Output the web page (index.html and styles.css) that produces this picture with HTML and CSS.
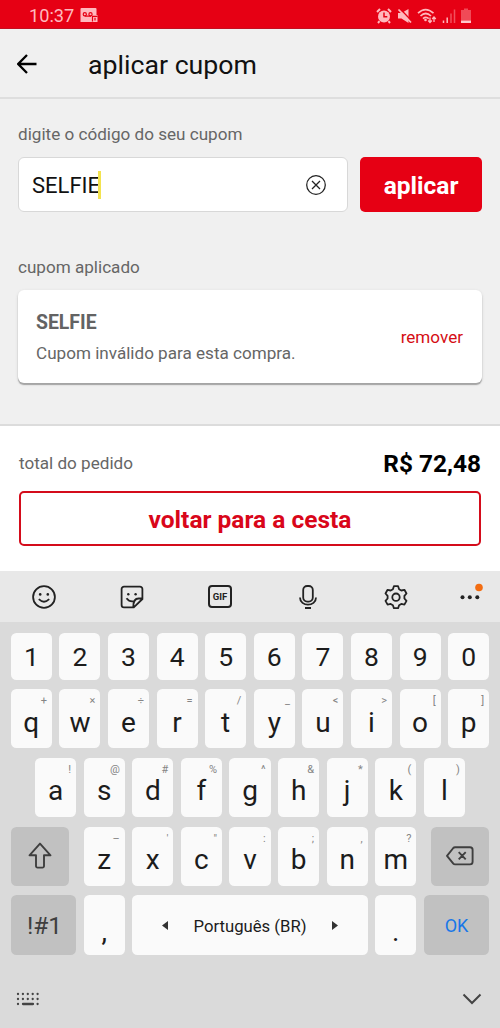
FILE: index.html
```html
<!DOCTYPE html>
<html lang="pt-BR">
<head>
<meta charset="utf-8">
<title>aplicar cupom</title>
<link rel="stylesheet" href="styles.css">
</head>
<body>
<div class="screen">
  <div class="status">
    <span class="clock">10:37</span>
    <svg class="voicemail" width="18" height="15" viewBox="0 0 18 15"><path fill="#ffb8bd" d="M1 0h14.500a1 1 0 0 1 1 1v6h1v7h-17V1a1 1 0 0 1 1-1z"/><g fill="none" stroke="#e60014" stroke-width="1.200"><circle cx="4.800" cy="6.300" r="1.600"/><circle cx="10.500" cy="6.300" r="1.600"/><path d="M4.800 8.200h6.200M12.500 13.500V8.300h5"/><path d="M15 9.800v2.600"/></g></svg>
    <div class="status-icons">
      <svg width="16" height="16" viewBox="0 0 16 16"><circle cx="8" cy="8.500" r="6" fill="#ffb8bd"/><path d="M1 4l3-3M15 4l-3-3M3.500 13.200L2 15M12.500 13.200L14 15" stroke="#ffb8bd" stroke-width="2"/><path d="M8 4.500v4.300h3.300" fill="none" stroke="#e60014" stroke-width="1.500"/></svg>
      <svg width="15" height="16" viewBox="0 0 15 16"><path fill="#ffb8bd" d="M1 5h3.500L11.500 1v14l-7-4.500H1z"/><path d="M2.500 .3l12 12.500" stroke="#e60014" stroke-width="1.600"/><path d="M1.500 1.500l12.500 13" stroke="#ffb8bd" stroke-width="1.800"/></svg>
      <svg width="20" height="16" viewBox="0 0 20 16"><g fill="none" stroke="#ffb8bd" stroke-width="1.700"><path d="M1 5.200q7.500-7.200 15.500 0M3.500 8q5.200-5 10.500 0M6 10.600q3-2.500 5.800 0"/><path stroke-width="1.300" d="M13 9.500v4.700M11.200 12.500l1.800 2 1.800-2M17 14V9.200M15.200 11l1.800-2 1.800 2"/></g><circle cx="8.500" cy="12" r="1.300" fill="#ffb8bd"/></svg>
      <svg width="14" height="16" viewBox="0 0 14 16"><path d="M1.500 12.500V15M5.200 9.500V15" stroke="#ffb8bd" stroke-width="1.500"/><path d="M9 5.500V15M12.500 1.500V15" stroke="#f1505c" stroke-width="1.500"/></svg>
      <svg width="10" height="16" viewBox="0 0 10 16"><path d="M3 .5h4v1.500h3v10.500H0V2h3z" fill="#f04a57"/><path d="M0 12.500h10V15H0z" fill="#ffc8cc"/></svg>
    </div>
  </div>
  <header class="topbar">
    <svg class="back" width="20" height="20" viewBox="0 0 20 20"><path d="M19.500 10H1.500M10 1L1.200 10l8.800 9" fill="none" stroke="#000" stroke-width="2.300"/></svg>
    <h1 class="title">aplicar cupom</h1>
  </header>
  <main class="content">
    <label class="label">digite o código do seu cupom</label>
    <div class="form">
      <div class="field"><span class="value">SELFIE</span><span class="caret"></span>
        <svg class="clear" width="20" height="20" viewBox="0 0 20 20"><g fill="none" stroke="#222" stroke-width="1.250"><circle cx="10" cy="10" r="9.300"/><path d="M6 6l8 8M14 6l-8 8"/></g></svg>
      </div>
      <button class="apply"><span class="apply-text">aplicar</span></button>
    </div>
    <div class="label applied">cupom aplicado</div>
    <section class="card">
      <div><div class="code">SELFIE</div><div class="message">Cupom inválido para esta compra.</div></div>
      <span class="remove">remover</span>
    </section>
  </main>
  <section class="summary">
    <div class="total"><span class="total-label">total do pedido</span><strong class="price">R$ 72,48</strong></div>
    <button class="return"><span class="return-text">voltar para a cesta</span></button>
  </section>
  <div class="tools">
    <svg width="24" height="24" viewBox="0 0 24 24"><g class="ink"><circle cx="12" cy="12" r="10.900"/><path d="M6.800 14.200q5.200 5 10.400 0"/></g><circle cx="8.200" cy="9.400" r="1.300"/><circle cx="15.800" cy="9.400" r="1.300"/></svg>
    <svg width="24" height="24" viewBox="0 0 24 24"><g class="ink"><path d="M4 1.700h16a2.400 2.400 0 0 1 2.400 2.400V14l-8.600 8.300H4a2.400 2.400 0 0 1-2.400-2.400V4.100A2.400 2.400 0 0 1 4 1.700zM22.200 13.500h-3.700q-5.200 0-5.200 8.500M6.500 13.300q3.200 4.300 8.300 2.700"/></g><circle cx="8.300" cy="9.200" r="1.200"/><circle cx="15.600" cy="9.200" r="1.200"/></svg>
    <span class="gif">GIF</span>
    <svg width="24" height="24" viewBox="0 0 24 24"><g class="ink"><rect x="7.200" y="1" width="9.600" height="15.600" rx="4"/><path d="M4 12.500c0 9.600 16 9.600 16 0M9 23h6"/></g></svg>
    <svg width="24" height="24" viewBox="0 0 24 24"><g class="ink" stroke-linejoin="round"><path d="M9.900 1.200h4.200l1 3 2.200 1.300 3.100-.7 2.100 3.700-2.100 2.400v2.600l2.100 2.400-2.100 3.700-3.100-.7-2.200 1.300-1 3H9.900l-1-3-2.200-1.300-3.100.7-2.100-3.700 2.100-2.400v-2.600L1.500 8.500l2.100-3.700 3.100.7 2.200-1.300z"/><circle cx="12" cy="12.200" r="3.700"/></g></svg>
    <svg class="more" width="24" height="24" viewBox="0 0 24 24"><circle cx="4.500" cy="12.300" r="2"/><circle cx="11.800" cy="12.300" r="2"/><circle cx="19.300" cy="12.300" r="2"/><circle cx="21" cy="2.500" r="3.800" fill="#f36d12"/></svg>
  </div>
  <div class="keyboard">
    <div class="row numbers"><div class="key">1</div><div class="key">2</div><div class="key">3</div><div class="key">4</div><div class="key">5</div><div class="key">6</div><div class="key">7</div><div class="key">8</div><div class="key">9</div><div class="key">0</div></div>
    <div class="row"><div class="key">q<sup>+</sup></div><div class="key">w<sup>×</sup></div><div class="key">e<sup>÷</sup></div><div class="key">r<sup>=</sup></div><div class="key">t<sup>/</sup></div><div class="key">y<sup>_</sup></div><div class="key">u<sup>&lt;</sup></div><div class="key">i<sup>&gt;</sup></div><div class="key">o<sup>[</sup></div><div class="key">p<sup>]</sup></div></div>
    <div class="row"><div class="key">a<sup>!</sup></div><div class="key">s<sup>@</sup></div><div class="key">d<sup>#</sup></div><div class="key">f<sup>%</sup></div><div class="key">g<sup>^</sup></div><div class="key">h<sup>&amp;</sup></div><div class="key">j<sup>*</sup></div><div class="key">k<sup>(</sup></div><div class="key">l<sup>)</sup></div></div>
    <div class="row">
      <div class="key dark shift"><svg width="24" height="28" viewBox="0 0 24 28"><path d="M12 1.600L22.500 13.300H16v10.800a1.500 1.500 0 0 1-1.500 1.500h-5A1.500 1.500 0 0 1 8 24.100V13.300H1.500z" fill="none" stroke="#3f3f3f" stroke-width="1.900" stroke-linejoin="round"/></svg></div>
      <div class="key">z<sup>–</sup></div><div class="key">x<sup>'</sup></div><div class="key">c<sup>"</sup></div><div class="key">v<sup>:</sup></div><div class="key">b<sup>;</sup></div><div class="key">n<sup>,</sup></div><div class="key">m<sup>?</sup></div>
      <div class="key dark erase"><svg width="28" height="20" viewBox="0 0 28 20"><path d="M9 1.200h15a2.600 2.600 0 0 1 2.600 2.600v12a2.600 2.600 0 0 1-2.600 2.600H9q-1 0-1.700-.8L1 9.800 7.300 2Q8 1.200 9 1.200zM12.700 6.200l7 7.200M19.700 6.200l-7 7.200" fill="none" stroke="#3f3f3f" stroke-width="1.900" stroke-linejoin="round"/></svg></div>
    </div>
    <div class="row">
      <div class="key dark wide symbols">!#1</div><div class="key punct">,</div>
      <div class="key space"><svg width="6" height="9" viewBox="0 0 6 9"><path d="M6 0v9L0 4.500z" fill="#333"/></svg><span class="language">Português (BR)</span><svg width="6" height="9" viewBox="0 0 6 9"><path d="M0 0v9l6-4.500z" fill="#333"/></svg></div>
      <div class="key punct">.</div><div class="key dark wide ok">OK</div>
    </div>
  </div>
  <div class="bottom">
    <svg width="24" height="14" viewBox="0 0 24 14"><path d="M2 2h.01M6.900 2h.01M11.800 2h.01M16.700 2h.01M21.600 2h.01M2 7h.01M6.900 7h.01M11.800 7h.01M16.700 7h.01M21.600 7h.01M2 12h.01M7 12h10M21.600 12h.01" stroke="#444" stroke-width="2.300" stroke-linecap="round"/></svg>
    <svg width="20" height="12" viewBox="0 0 20 12"><path d="M1.500 1.500L10 10l8.500-8.500" fill="none" stroke="#444" stroke-width="2"/></svg>
  </div>
</div>
</body>
</html>
```
FILE: styles.css
```css
* { box-sizing: border-box; }
body { margin: 0; font-family: Roboto, sans-serif; background: #dadada; }
svg { display: block; flex: none; }
button { font-family: inherit; padding: 0; }
.screen { width: 500px; height: 1028px; display: flex; flex-direction: column; overflow: hidden; }
.status { height: 29px; flex: none; display: flex; align-items: center; padding: 3px 29px 0 29px; background: #e60014; border-bottom: 1px solid #c30f20; }
.clock { font-size: 18.200px; line-height: 24px; color: #ffb8bd; width: 51px; }
.status-icons { display: flex; margin-left: auto; gap: 5px; align-items: center; }
.topbar { height: 70px; flex: none; display: flex; align-items: center; padding: 1px 17px 0; background: #f0f0f0; border-bottom: 2px solid #dedede; }
.title { margin: 3px 0 0 51px; font-size: 26.700px; line-height: 32px; font-weight: 400; color: #111; }
.content { height: 325px; flex: none; background: #f0f0f0; padding: 25px 18px 0; }
.label { display: block; font-size: 17.100px; line-height: 20px; color: #666; }
.form { display: flex; gap: 12px; margin-top: 13px; }
.field { width: 330px; height: 55px; background: #fff; border: 1px solid #d8d8d8; border-radius: 6px; display: flex; align-items: center; padding: 0 21px 0 13px; }
.value { font-size: 22px; color: #111; width: 66px; margin-top: 1px; white-space: nowrap; }
.caret { width: 3px; height: 28px; background: #f3e34f; }
.clear { margin-left: auto; }
.apply { width: 122px; height: 55px; border: 0; border-radius: 5px; background: #e60014; color: #fff; font-size: 24.500px; font-weight: 700; padding-top: 2px; }
.applied { margin-top: 45px; }
.card { height: 93px; margin-top: 13px; background: #fff; border-radius: 6px; box-shadow: 0 2px 1px #a5a5a5, 0 1px 3px #ccc; display: flex; justify-content: space-between; align-items: center; padding: 2px 19px 0 18px; }
.code { font-size: 19.400px; font-weight: 700; line-height: 24px; color: #636363; padding-top: 1px; }
.message { font-size: 17.100px; line-height: 24px; margin-top: 6px; color: #666; }
.remove { font-size: 17.100px; color: #d50d14; margin-bottom: 2px; }
.summary { height: 147px; flex: none; background: #fff; border-top: 2px solid #dcdcdc; padding: 21px 19px 0; }
.total { display: flex; justify-content: space-between; align-items: center; height: 32px; }
.total-label { font-size: 17.100px; color: #666; }
.price { font-size: 24.400px; color: #000; }
.return { width: 462px; height: 55px; margin-top: 12px; display: block; border: 2px solid #d40c1b; border-radius: 5px; background: #fff; color: #d9061a; font-size: 24.500px; font-weight: 700; padding-top: 2px; }
.tools { height: 51px; flex: none; background: #e8e8e8; display: flex; gap: 64px; align-items: center; padding: 0 0 0 32px; fill: #222; }
.tools svg { overflow: visible; }
.more { margin-left: -14px; }
.ink { fill: none; stroke: #222; stroke-width: 1.800px; }
.gif { width: 24px; height: 23px; flex: none; border: 2px solid #222; border-radius: 4px; font-size: 9.500px; line-height: 19px; font-weight: 700; text-align: center; color: #222; }
.keyboard { padding: 11px 10.700px 0; display: flex; flex-direction: column; gap: 9.600px; }
.row { display: flex; gap: 7.500px; height: 59.200px; justify-content: center; }
.numbers { height: 46.500px; }
.key { width: 41.100px; flex: none; border-radius: 5.500px; background: #fafafa; color: #1c1c1c; display: flex; align-items: center; justify-content: center; font-size: 28px; line-height: 32px; position: relative; padding-top: 8px; }
.numbers .key { font-size: 26.500px; padding-top: 1px; }
.key sup { position: absolute; right: 5px; top: 4px; font-size: 11px; line-height: 15px; color: #858585; }
.dark { background: #c1c1c1; color: #3f3f3f; padding-top: 0; }
.shift { width: 58.200px; margin-right: 7px; }
.erase { width: 58.200px; margin-left: 7px; }
.wide { width: 65.400px; }
.symbols { font-size: 24.500px; padding: 1px 0 0 2px; }
.punct { padding-top: 14px; }
.space { width: 235.500px; gap: 25px; padding-top: 1px; }
.language { font-size: 16.700px; padding-top: 2px; }
.ok { font-size: 18px; color: #1877e8; padding-top: 2px; }
.bottom { display: flex; justify-content: space-between; align-items: center; padding: 0 18px 0 16px; margin-top: 37px; }
```
